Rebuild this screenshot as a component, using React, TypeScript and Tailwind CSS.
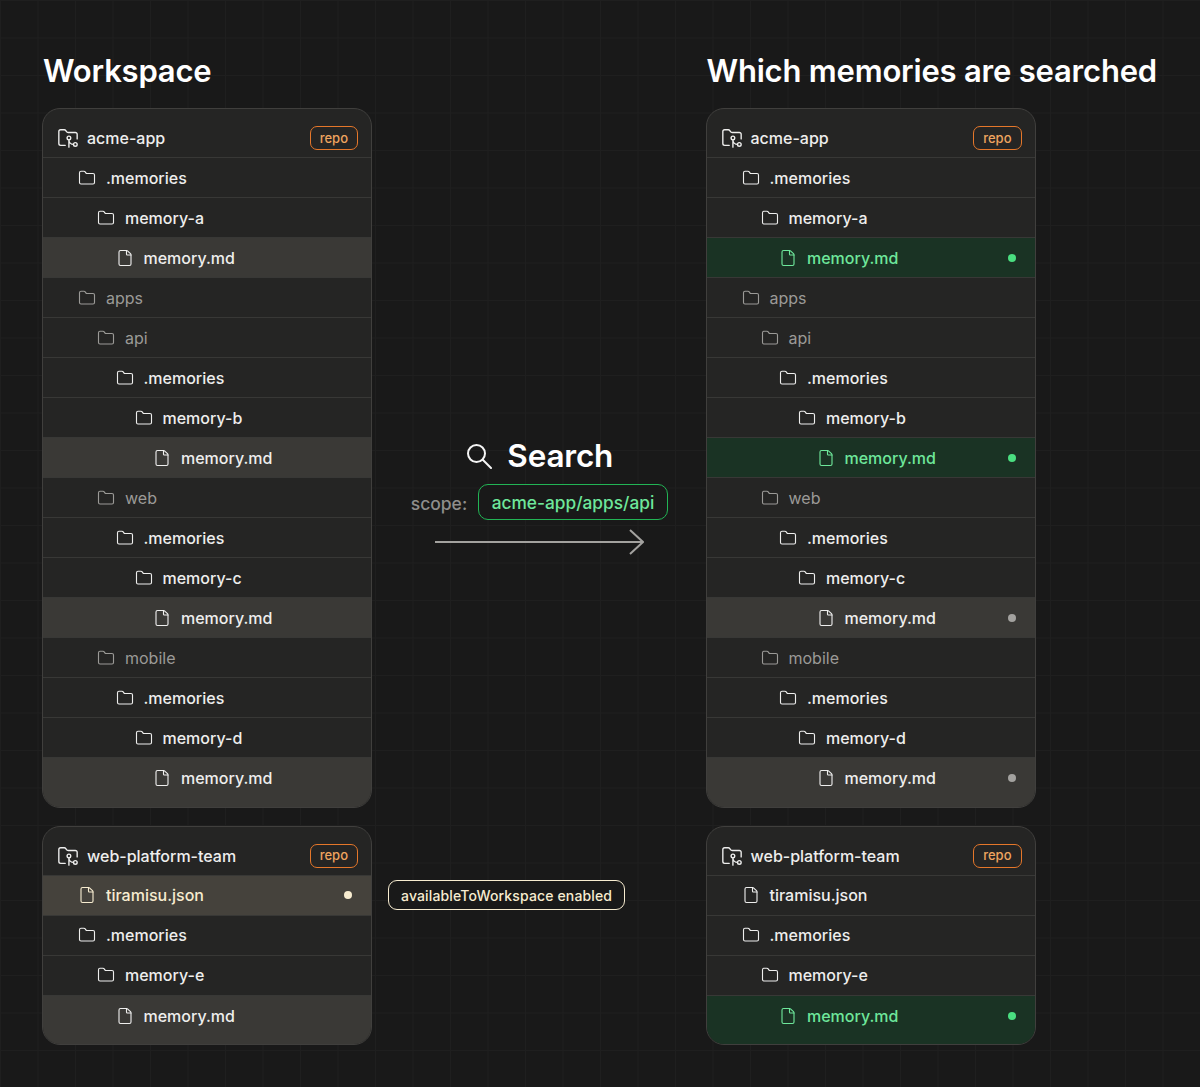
import { File, Folder, FolderGit2 } from "lucide-react";

type Kind = "folder" | "dim" | "file" | "hit" | "miss" | "cream" | "plain";
type Item = { name: string; level: number; kind: Kind };

const LEVEL_PADDING: Record<number, string> = {
  1: "pl-[35px]",
  2: "pl-[54px]",
  3: "pl-[72.5px]",
  4: "pl-[91.5px]",
  5: "pl-[110px]",
};

const acme = (a: Kind, b: Kind, c: Kind, d: Kind): Item[] => [
  { name: ".memories", level: 1, kind: "folder" },
  { name: "memory-a", level: 2, kind: "folder" },
  { name: "memory.md", level: 3, kind: a },
  { name: "apps", level: 1, kind: "dim" },
  { name: "api", level: 2, kind: "dim" },
  { name: ".memories", level: 3, kind: "folder" },
  { name: "memory-b", level: 4, kind: "folder" },
  { name: "memory.md", level: 5, kind: b },
  { name: "web", level: 2, kind: "dim" },
  { name: ".memories", level: 3, kind: "folder" },
  { name: "memory-c", level: 4, kind: "folder" },
  { name: "memory.md", level: 5, kind: c },
  { name: "mobile", level: 2, kind: "dim" },
  { name: ".memories", level: 3, kind: "folder" },
  { name: "memory-d", level: 4, kind: "folder" },
  { name: "memory.md", level: 5, kind: d },
];

const team = (first: Kind, last: Kind): Item[] => [
  { name: "tiramisu.json", level: 1, kind: first },
  { name: ".memories", level: 1, kind: "folder" },
  { name: "memory-e", level: 2, kind: "folder" },
  { name: "memory.md", level: 3, kind: last },
];

const ROW_STYLE: Record<Kind, string> = {
  folder: "text-[#eeeeed]",
  dim: "text-[#9b9a97]",
  file: "bg-[#3a3936] text-[#eeeeed]",
  plain: "text-[#eeeeed]",
  hit: "bg-[#1a3324] text-[#6ee79b]",
  miss: "bg-[#3a3936] text-[#eeeeed]",
  cream: "bg-[#45423c] text-[#f7ecd0]",
};

const DOT_STYLE: Partial<Record<Kind, string>> = {
  hit: "bg-[#4ade80]",
  miss: "bg-[#a3a29f]",
  cream: "bg-[#f7ecd0]",
};

function Row({ item, last }: { item: Item; last: boolean }) {
  const isFolder = item.kind === "folder" || item.kind === "dim";
  const Icon = isFolder ? Folder : File;
  const dot = DOT_STYLE[item.kind];
  return (
    <div
      className={`flex shrink-0 items-center gap-[10px] pr-[19px] ${LEVEL_PADDING[item.level]} ${ROW_STYLE[item.kind]} ${
        last ? "h-[49px] pb-[9px]" : "h-10 border-b border-[#383836]"
      }`}
    >
      <Icon size={18} strokeWidth={1.5} className="shrink-0" />
      <span className={`flex-1 text-base leading-6 ${item.kind === "dim" ? "font-normal" : "font-medium"}`}>
        {item.name}
      </span>
      {dot && <span className={`h-2 w-2 rounded-full ${dot}`} />}
    </div>
  );
}

function Panel({ name, items }: { name: string; items: Item[] }) {
  return (
    <div className="flex w-[330px] flex-col overflow-hidden rounded-[18px] border border-[#403f3d] bg-[#252524]">
      <div className="flex h-[49px] shrink-0 items-center gap-[8px] border-b border-[#383836] pl-[14px] pr-[13px] pt-[10px]">
        <FolderGit2 size={22} strokeWidth={1.5} className="shrink-0 text-[#eeeeed]" />
        <span className="flex-1 text-base font-medium leading-6 text-[#eeeeed]">{name}</span>
        <span className="rounded-[7px] border-[1.5px] border-[#e5772a] px-[9px] py-[2.5px] text-[13px] font-medium leading-[17px] text-[#efa45f]">
          repo
        </span>
      </div>
      {items.map((item, i) => (
        <Row key={i} item={item} last={i === items.length - 1} />
      ))}
    </div>
  );
}

function Title({ children }: { children: string }) {
  return <h1 className="whitespace-nowrap pl-[1px] text-[31px] font-semibold leading-[38px] tracking-[-0.2px] text-white">{children}</h1>;
}

export default function App() {
  return (
    <div
      className="h-[1087px] w-full overflow-hidden bg-[#191919] bg-[linear-gradient(#1f1f1f_1px,transparent_1px),linear-gradient(90deg,#1f1f1f_1px,transparent_1px)] bg-[size:37.5px_37.5px] pl-[42px] pt-[52px]"
    >
      <div
        className="grid grid-cols-[330px_333.5px_330px] grid-rows-[38px_699.5px_219.5px] gap-y-[18px]"
        style={{ fontFamily: "Inter, 'Liberation Sans', sans-serif" }}
      >
        <Title>Workspace</Title>
        <div />
        <Title>Which memories are searched</Title>

        <Panel name="acme-app" items={acme("file", "file", "file", "file")} />
        <div className="flex flex-col items-center pt-[327px]">
          <div className="flex items-center gap-[15px] pl-[2px]">
            <svg width="26" height="26" viewBox="0 0 26 26" fill="none" stroke="#f5f5f5" strokeWidth="2" strokeLinecap="round">
              <circle cx="10.5" cy="10.5" r="8.5" />
              <path d="M17 17 L25 25" />
            </svg>
            <span className="text-[31.5px] font-semibold leading-[42px] tracking-[-0.2px] text-white">Search</span>
          </div>
          <div className="mt-[7px] flex items-center gap-[11px] pl-[1px]">
            <span className="pt-[3px] text-[17.5px] font-medium leading-6 text-[#8f8e8b]">scope:</span>
            <span className="rounded-[10px] border-[1.5px] border-[#22b455] bg-[#191919] px-[12.5px] pb-[4.5px] pt-[5.5px] text-[17.3px] font-medium leading-6 text-[#6ee79b]">
              acme-app/apps/api
            </span>
          </div>
          <svg width="210" height="28" viewBox="0 0 210 28" fill="none" stroke="#a3a29f" strokeWidth="2" className="ml-[1px] mt-[8px]">
            <path d="M1 14 H208" />
            <path d="M196 2 L209 14 L196 26" />
          </svg>
        </div>
        <Panel name="acme-app" items={acme("hit", "hit", "miss", "miss")} />

        <Panel name="web-platform-team" items={team("cream", "file")} />
        <div className="pl-[16px] pt-[54.5px]">
          <span className="inline-block whitespace-nowrap rounded-[9px] border-[1.5px] border-[#f7ecd0] bg-[#191919] px-[12px] py-[2.5px] text-[14px] font-medium leading-[23px] tracking-[0.15px] text-[#f7ecd0]">
            availableToWorkspace enabled
          </span>
        </div>
        <Panel name="web-platform-team" items={team("plain", "hit")} />
      </div>
    </div>
  );
}
